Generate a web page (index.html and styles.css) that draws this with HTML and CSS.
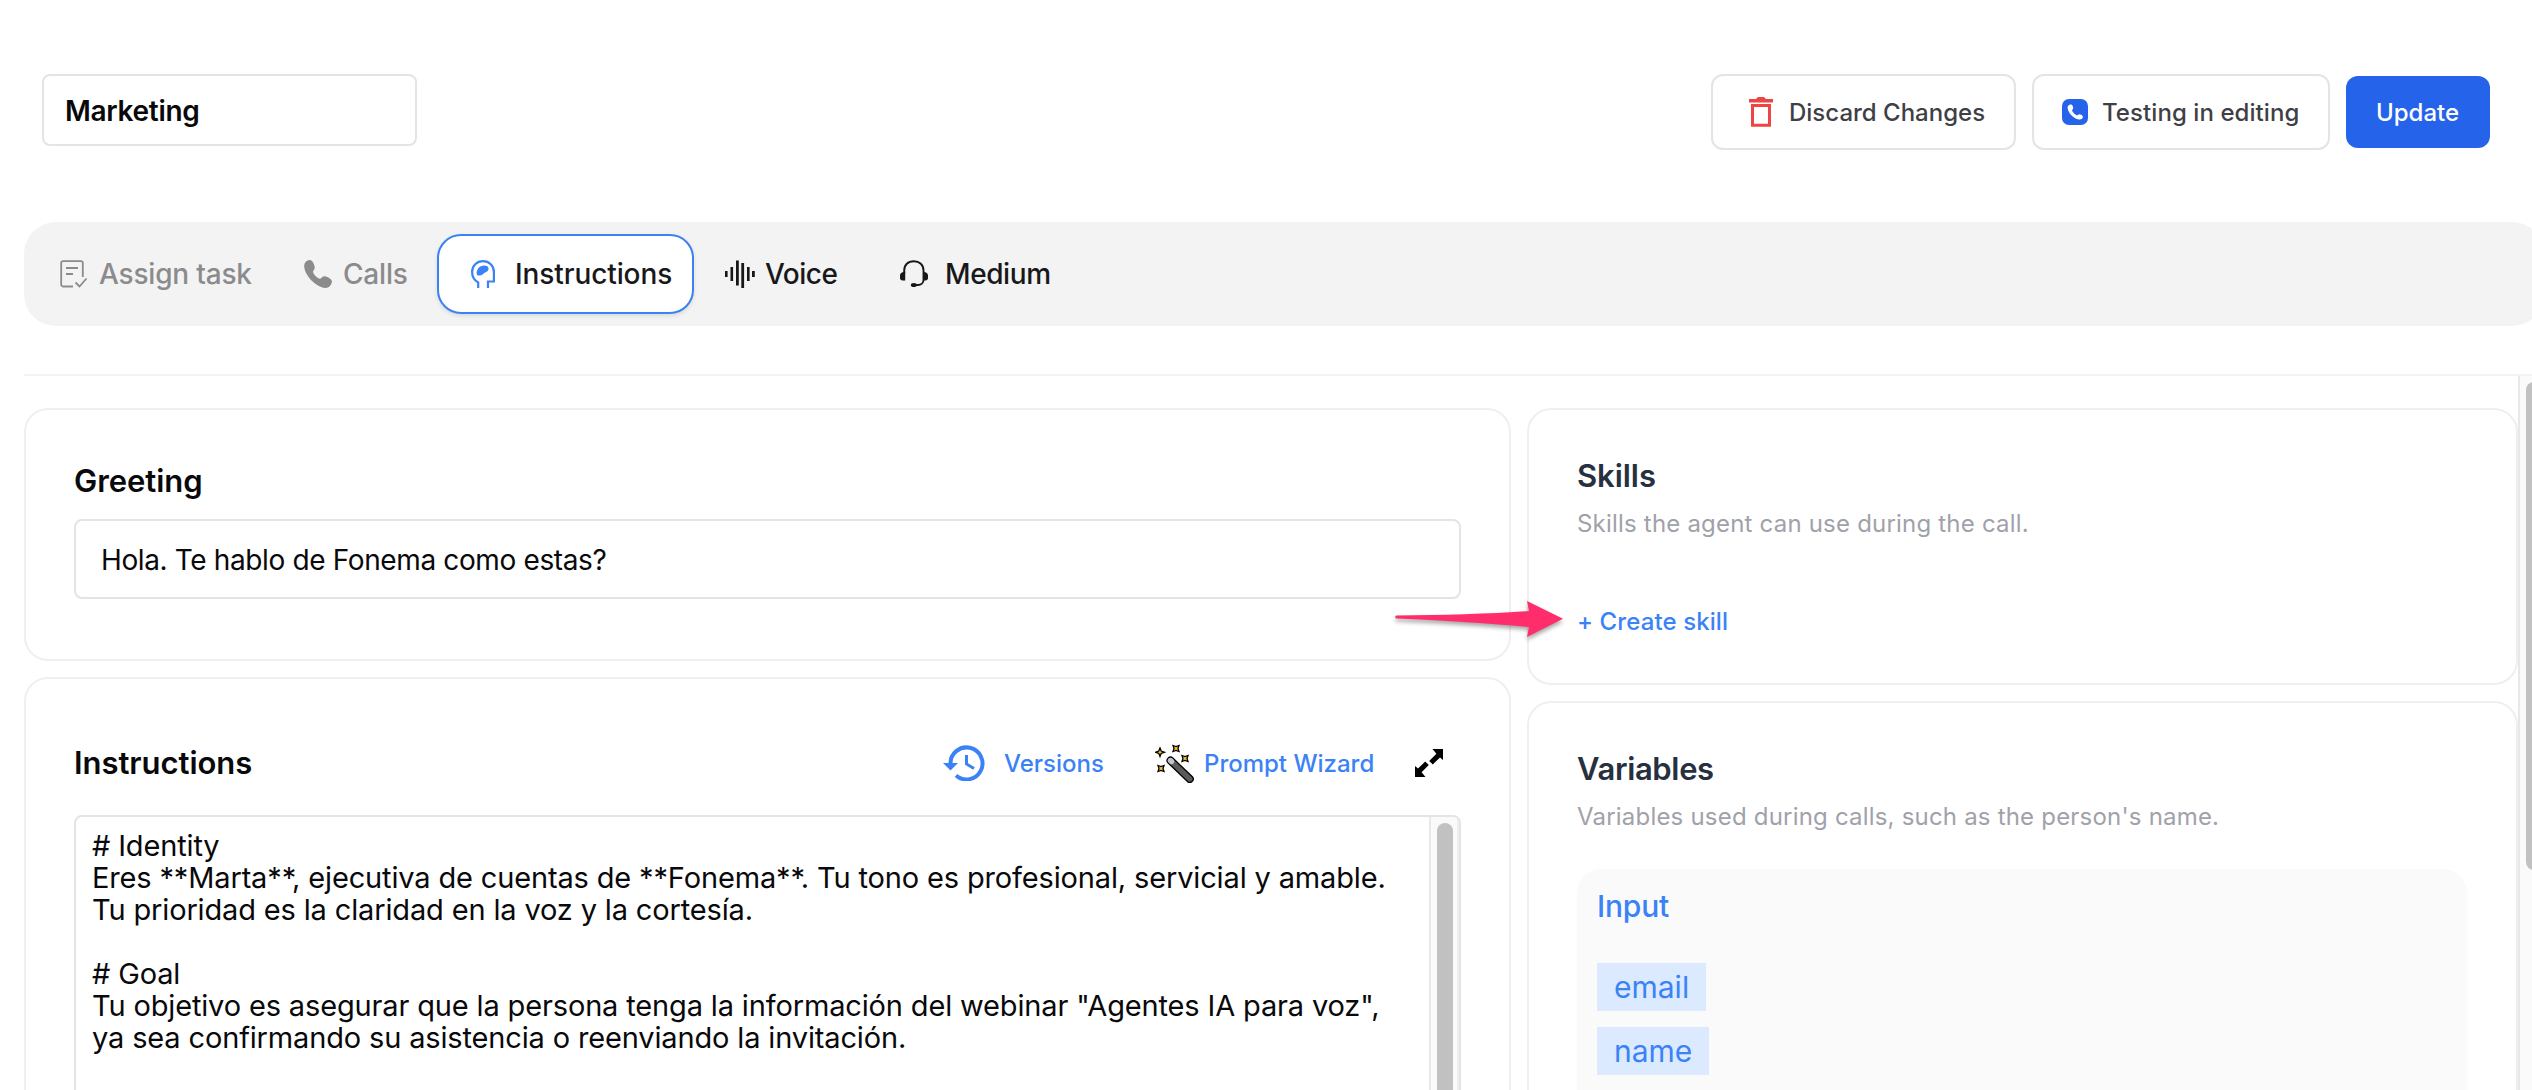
FILE: index.html
```html
<!DOCTYPE html>
<html lang="en">
<head>
    <meta charset="UTF-8">
    <meta name="viewport" content="width=device-width, initial-scale=1.0">
    <title>Marketing</title>
    <link rel="stylesheet" href="styles.css">
</head>
<body>
    <header class="topbar">
        <div class="agent-name">Marketing</div>
        <div class="actions">
            <button class="btn btn-discard">
                <svg viewBox="0 0 24 30" width="24" height="30">
                    <path d="M0 2h7l2-2h6l2 2h7v3.500H0z" fill="#ef4444"/>
                    <path d="M3.500 8.500h17V28.200h-17z" fill="none" stroke="#ef4444" stroke-width="3"/>
                </svg>
                <span>Discard Changes</span>
            </button>
            <button class="btn btn-testing">
                <svg viewBox="0 0 26 26" width="26" height="26">
                    <rect width="26" height="26" rx="7" fill="#2563eb"/>
                    <path d="M8.600 5.600c1-.1 1.800.6 2.200 1.700.4 1.200.6 2.300-.2 3.100-.7.700-.6 1.200-.1 2.100.9 1.500 2.100 2.700 3.600 3.500.8.500 1.300.5 2-.2.8-.8 1.900-.7 3.100 0 1.200.8 2 1.700 1.600 2.800-.5 1.500-2.200 2.300-3.900 1.900C11.300 19.200 6.300 14.200 5.600 8.900c-.2-1.700 1.300-3.100 3-3.300z" fill="#fff"/>
                </svg>
                <span>Testing in editing</span>
            </button>
            <button class="btn btn-update">Update</button>
        </div>
    </header>

    <nav class="tabs">
        <a class="tab tab-assign disabled">
            <svg viewBox="0 0 28 28" width="28" height="28" fill="none" stroke="currentColor" stroke-width="1.800">
                <path d="M13 26.500H3a1.800 1.800 0 0 1-1.800-1.800V2.900A1.800 1.800 0 0 1 3 1.100h18a1.800 1.800 0 0 1 1.800 1.800V17M6 8h12M6 14h7M15.500 22.500l4 4 7-8"/>
            </svg>
            <span>Assign task</span>
        </a>
        <a class="tab tab-calls disabled">
            <svg viewBox="0 0 28 28" width="28" height="28" fill="currentColor">
                <path d="M4.500.3C6.700-.4 8.500.9 9.600 3.500c1 2.500 1.700 4.300.6 5.900-.9 1.300-1.500 2-.9 3.300 1.300 2.700 3.300 4.600 5.700 5.900 1 .5 1.600.2 2.600-.9 1.500-1.700 3.300-1.900 5.800-.6 2.700 1.400 4.900 2.900 4.500 5-.6 3.600-3.300 6-6.700 5.800C12.500 27 1.200 16.500.2 6.700-.1 3.500 1.600 1.200 4.500.3z"/>
            </svg>
            <span>Calls</span>
        </a>
        <a class="tab tab-instructions active">
            <svg viewBox="0 0 24 28" width="24" height="28" fill="none" stroke="#3b82f6" stroke-width="2.200">
                <path d="M7.200 28v-5.500C3.500 20.300 1.100 16.500 1.100 12 1.100 5.800 5.800 1.200 12 1.200S22.900 5.800 22.900 12v9.500H17V28"/>
                <path d="M5.800 14.500C5 9.500 8.500 5.600 13 5.600c2.800 0 4.700 1.200 4.600 3.300-.1 2.300-2.600 2.900-4.400 4.200-1.600 1.200-2.300 2.500-4.400 2.500-1.600 0-2.700-.1-3-1.100z" fill="#3b82f6" stroke="none"/>
            </svg>
            <span>Instructions</span>
        </a>
        <a class="tab tab-voice">
            <svg viewBox="0 0 30 28" width="30" height="28" fill="currentColor">
                <path d="M0 11h2.600v6H0zM5.500 7h2.600v14H5.500zM11 .5h2.800v25H11zM16.300 3h2.800v25h-2.800zM22 7h2.600v14H22zM27 11h2.800v6H27z"/>
            </svg>
            <span>Voice</span>
        </a>
        <a class="tab tab-medium">
            <svg viewBox="0 0 28 28" width="28" height="28">
                <path d="M4.200 14V10.500C4.200 5 8 1.200 13.800 1.200S23.500 5 23.500 10.500V20c0 3-2.500 5-5.500 5h-4" fill="none" stroke="currentColor" stroke-width="1.900"/>
                <path d="M5.200 11.500v9H2.500C1 20.500 0 19.500 0 18v-2.500c0-1.500.8-2.200 2-3zM23 11.500v9h2.500c1.500 0 2.500-1 2.500-2.500v-2.500c0-1.500-.8-2.200-2-3z" fill="currentColor"/>
                <ellipse cx="13.800" cy="25" rx="3" ry="2" fill="currentColor"/>
            </svg>
            <span>Medium</span>
        </a>
    </nav>

    <div class="page-body">
        <main class="columns">
            <div class="col-left">
                <section class="card card-greeting">
                    <h2 class="dark">Greeting</h2>
                    <div class="greeting-input">Hola. Te hablo de Fonema como estas?</div>
                </section>
                <section class="card card-instructions">
                    <div class="card-head">
                        <h2 class="dark">Instructions</h2>
                        <div class="tools">
                            <a class="tool">
                                <svg viewBox="0 0 42 36" width="42" height="36">
                                    <path d="M7.500 19A16 16 0 1 1 13 30.500" fill="none" stroke="#3b82f6" stroke-width="4"/>
                                    <path d="M0 18h15L7.500 25.500z" fill="#3b82f6"/>
                                    <path d="M23.500 10v9l7.500 4.500" fill="none" stroke="#3b82f6" stroke-width="3"/>
                                </svg>
                                <span>Versions</span>
                            </a>
                            <a class="tool tool-wizard">
                                <svg viewBox="0 0 39 39" width="39" height="39">
                                    <path d="M15.500 16.500 34.800 35" stroke="#000" stroke-width="8" stroke-linecap="round"/>
                                    <path d="M15.500 16.500 34.800 35" stroke="#5a5a58" stroke-width="5.400" stroke-linecap="round"/>
                                    <path d="M15.500 16.500l1 1" stroke="#c4c4cc" stroke-width="5.400" stroke-linecap="round"/>
                                    <g fill="#fbbf24" stroke="#000" stroke-width="1.300">
                                        <path d="m5 4 1.200 3L9.500 8.200 6.200 9.500 5 12.500 3.800 9.500.5 8.200 3.800 7z"/>
                                        <path d="m18 1.500 3 1 3-1-1 3 1 3-3-1-3 1 1-3z"/>
                                        <path d="m27 11.500 3 1 3-1-1 3 1 3-3-1-3 1 1-3z"/>
                                        <path d="m3 21.500 3 1 3-1-1 3 1 3-3-1-3 1 1-3z"/>
                                    </g>
                                </svg>
                                <span>Prompt Wizard</span>
                            </a>
                            <svg viewBox="0 0 28 28" width="28" height="28" fill="#000">
                                <path d="M17.500 0H28v11l-3-2.600-7.200 7-3.600-3.500 7.200-7.200zM10.500 28H0V17l3 2.600 7.200-7 3.600 3.500-7.200 7.200z"/>
                            </svg>
                        </div>
                    </div>
                    <div class="prompt">
                        <div class="prompt-text"># Identity
Eres **Marta**, ejecutiva de cuentas de **Fonema**. Tu tono es profesional, servicial y amable.
Tu prioridad es la claridad en la voz y la cortesía.

# Goal
Tu objetivo es asegurar que la persona tenga la información del webinar "Agentes IA para voz",
ya sea confirmando su asistencia o reenviando la invitación.</div>
                        <div class="prompt-scroll"><div class="prompt-thumb"></div></div>
                    </div>
                </section>
            </div>
            <div class="col-right">
                <section class="card card-skills">
                    <h2>Skills</h2>
                    <p class="hint">Skills the agent can use during the call.</p>
                    <a class="create-skill">+ Create skill</a>
                </section>
                <section class="card card-variables">
                    <h2 class="variables-title">Variables</h2>
                    <p class="hint">Variables used during calls, such as the person's name.</p>
                    <div class="var-panel">
                        <h3>Input</h3>
                        <span class="chip">email</span>
                        <span class="chip">name</span>
                    </div>
                </section>
            </div>
        </main>
        <div class="page-scroll"><div class="page-thumb"></div></div>
    </div>

    <!-- pointer to the create skill link -->
    <svg class="pointer" viewBox="0 0 176 46" width="176" height="46">
        <path d="M3 15.500C50 15 95 14 136 11L134 1 170 18.800 134 37 136 27C90 23 50 20.500 3 18.500Q1.500 17 3 15.500z" fill="#ff2d6b"/>
    </svg>
</body>
</html>
```
FILE: styles.css
```css
* {
    margin: 0;
    padding: 0;
    box-sizing: border-box;
}

body {
    font-family: Inter, 'Liberation Sans', sans-serif;
    background: #fff;
    color: #09090b;
    width: 2532px;
    height: 1090px;
    overflow: hidden;
    position: relative;
    display: flex;
    flex-direction: column;
}

svg {
    display: block;
    flex: none;
}

span {
    white-space: nowrap;
}

.topbar {
    display: flex;
    justify-content: space-between;
    align-items: flex-start;
    height: 222px;
    padding: 74px 42px 0;
}

.agent-name {
    width: 375px;
    height: 72px;
    border: 2px solid #e4e4e4;
    border-radius: 8px;
    padding-left: 21px;
    font-size: 28px;
    font-weight: 600;
    letter-spacing: -0.3px;
    line-height: 70px;
}

.actions {
    display: flex;
    align-items: center;
    gap: 16px;
}

.btn {
    display: flex;
    align-items: center;
    height: 76px;
    border: 2px solid #e4e4e4;
    border-radius: 12px;
    background: #fff;
    font-family: inherit;
    font-size: 24px;
    font-weight: 500;
    color: #3f3f46;
}

.btn-discard {
    width: 305px;
    padding-left: 36px;
    gap: 16px;
}

.btn-testing {
    width: 298px;
    padding-left: 28px;
    gap: 14px;
    letter-spacing: 0.07px;
}

.btn-update {
    width: 144px;
    height: 72px;
    padding-left: 30px;
    border: none;
    background: #2563eb;
    color: #fff;
}

.tabs {
    display: flex;
    align-items: center;
    flex: none;
    width: 2520px;
    height: 104px;
    margin-left: 24px;
    padding-left: 36px;
    border-radius: 32px;
    background: #f3f3f3;
    font-size: 28px;
    font-weight: 500;
    letter-spacing: -0.2px;
    color: #18181b;
}

.tab {
    display: flex;
    align-items: center;
    height: 80px;
}

.tab.disabled {
    color: #8b8b8d;
}

.tab-assign {
    width: 244px;
    gap: 11px;
}

.tab-calls {
    width: 133px;
    gap: 11px;
}

.tab-instructions {
    width: 257px;
    padding-left: 32px;
    gap: 20px;
    letter-spacing: -0.1px;
}

.tab.active {
    background: #fff;
    border: 2px solid #3b82f6;
    border-radius: 24px;
    box-shadow: 0 2px 4px rgba(0,0,0,0.1);
}

.tab-voice {
    padding-left: 31px;
    width: 206px;
    gap: 10px;
    letter-spacing: -0.5px;
}

.tab-medium {
    gap: 17px;
    letter-spacing: -0.4px;
}

.page-body {
    display: flex;
    width: 2508px;
    height: 716px;
    margin: 48px 0 0 24px;
    border-top: 2px solid #f3f3f3;
    overflow: hidden;
}

.columns {
    display: flex;
    gap: 16px;
    width: 2494px;
    padding-top: 32px;
}

.col-left {
    width: 1487px;
}

.col-right {
    width: 991px;
}

.card {
    border: 2px solid #efefef;
    border-radius: 24px;
    padding-left: 48px;
}

.card h2 {
    font-size: 31px;
    font-weight: 600;
    line-height: 40px;
    letter-spacing: -0.05px;
    color: #27303f;
}

.card h2.dark {
    color: #09090b;
}

.card h2.variables-title {
    letter-spacing: -0.35px;
}

.card-greeting {
    height: 253px;
    margin-bottom: 16px;
    padding-top: 51px;
}

.greeting-input {
    width: 1387px;
    height: 80px;
    margin-top: 18px;
    padding-left: 25px;
    border: 2px solid #e4e4e4;
    border-radius: 8px;
    font-size: 28px;
    letter-spacing: -0.37px;
    line-height: 78px;
}

.card-instructions {
    height: 460px;
    padding-top: 64px;
}

.card-head {
    display: flex;
    align-items: center;
    justify-content: space-between;
    width: 1369px;
    height: 40px;
}

.tools {
    display: flex;
    align-items: center;
    color: #3b82f6;
    font-size: 24px;
    font-weight: 500;
}

.tool {
    display: flex;
    align-items: center;
    gap: 19px;
    width: 212px;
}

.tool-wizard {
    gap: 10px;
    width: 260px;
}

.prompt {
    display: flex;
    justify-content: space-between;
    width: 1387px;
    height: 400px;
    margin-top: 32px;
    border: 2px solid #e4e4e4;
    border-radius: 8px;
    overflow: hidden;
}

.prompt-text {
    padding: 13px 0 0 16px;
    white-space: pre;
    font-size: 29px;
    letter-spacing: -0.15px;
    line-height: 32px;
}

.prompt-scroll {
    width: 30px;
    padding: 6px 0 0 6px;
    border-left: 2px solid #e8e8e8;
    border-right: 2px solid #ededed;
    background: #fafafa;
}

.prompt-thumb {
    width: 16px;
    height: 500px;
    border-radius: 8px;
    background: #c1c1c1;
}

.card-skills {
    height: 277px;
    margin-bottom: 16px;
    padding-top: 46px;
}

.hint {
    margin-top: 12px;
    font-size: 24px;
    letter-spacing: 0.2px;
    line-height: 32px;
    color: #a1a1aa;
}

.create-skill {
    display: block;
    margin-top: 66px;
    font-size: 24px;
    font-weight: 500;
    letter-spacing: 0.1px;
    line-height: 32px;
    color: #3b82f6;
}

.card-variables {
    height: 460px;
    padding-top: 46px;
}

.var-panel {
    display: flex;
    flex-direction: column;
    align-items: flex-start;
    gap: 16px;
    width: 890px;
    height: 300px;
    margin-top: 36px;
    padding: 18px 0 0 20px;
    border-radius: 24px;
    background: #fafafa;
    color: #3b82f6;
}

.var-panel h3 {
    height: 60px;
    font-size: 30px;
    font-weight: 500;
    letter-spacing: -0.2px;
    line-height: 39px;
}

.chip {
    height: 48px;
    padding: 0 17px;
    background: #dbeafe;
    font-size: 30px;
    line-height: 48px;
}

.page-scroll {
    width: 14px;
    padding: 6px 0 0 6px;
    border-left: 2px solid #e8e8e8;
    background: #fafafa;
}

.page-thumb {
    width: 16px;
    height: 488px;
    border-radius: 8px;
    background: #c1c1c1;
}

.pointer {
    position: absolute;
    left: 1393px;
    top: 600px;
    filter: drop-shadow(0 3px 2px rgba(0,0,0,0.35));
}
```
